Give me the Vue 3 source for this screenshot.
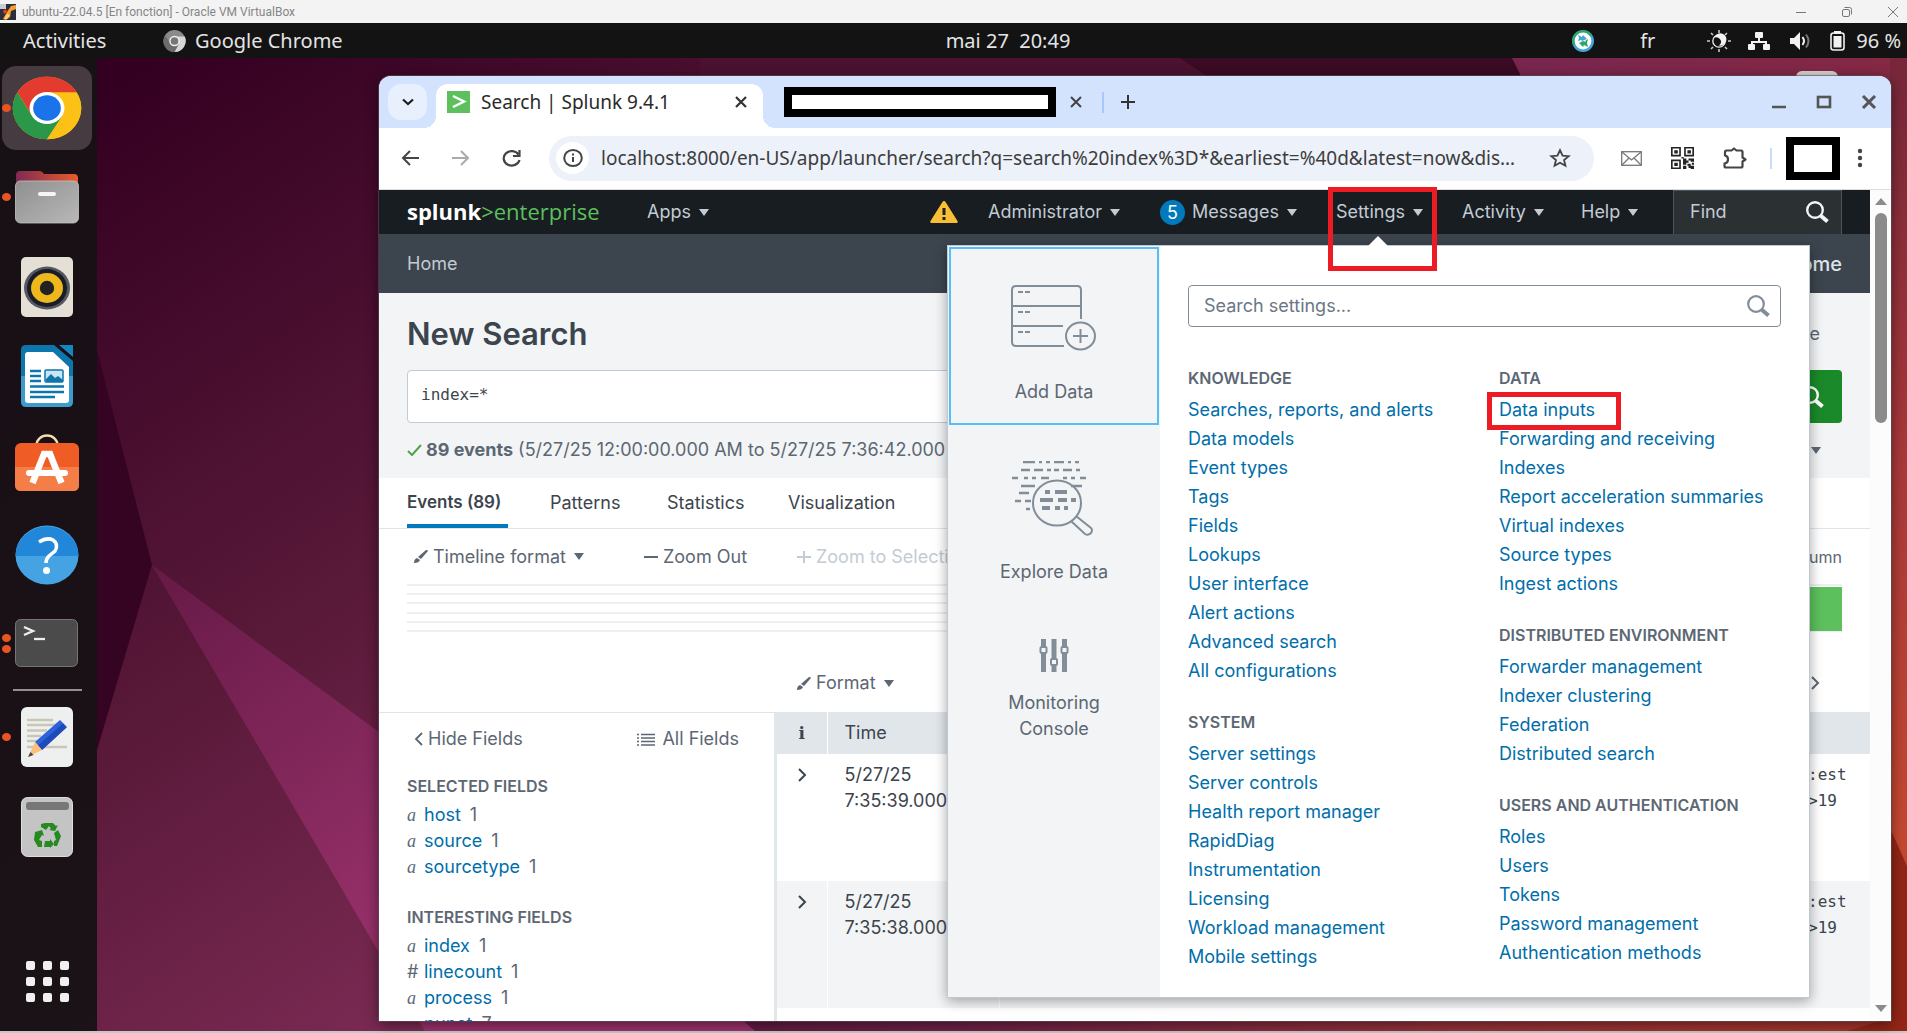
<script setup>
const dockApps = [
  { id: 'chrome', label: 'Google Chrome', dots: 1, active: true },
  { id: 'files', label: 'Files', dots: 1 },
  { id: 'music', label: 'Rhythmbox', dots: 0 },
  { id: 'writer', label: 'LibreOffice Writer', dots: 0 },
  { id: 'software', label: 'Ubuntu Software', dots: 0 },
  { id: 'help', label: 'Help', dots: 0 },
  { id: 'terminal', label: 'Terminal', dots: 2 },
]
const dockExtra = [
  { id: 'editor', label: 'Text Editor', dots: 1 },
  { id: 'trash', label: 'Trash', dots: 0 },
]
const knowledgeColumn = [
  {
    title: 'Knowledge',
    items: ['Searches, reports, and alerts', 'Data models', 'Event types', 'Tags', 'Fields', 'Lookups', 'User interface', 'Alert actions', 'Advanced search', 'All configurations'],
  },
  {
    title: 'System',
    items: ['Server settings', 'Server controls', 'Health report manager', 'RapidDiag', 'Instrumentation', 'Licensing', 'Workload management', 'Mobile settings'],
  },
]
const dataColumn = [
  {
    title: 'Data',
    items: ['Data inputs', 'Forwarding and receiving', 'Indexes', 'Report acceleration summaries', 'Virtual indexes', 'Source types', 'Ingest actions'],
  },
  {
    title: 'Distributed environment',
    items: ['Forwarder management', 'Indexer clustering', 'Federation', 'Distributed search'],
  },
  {
    title: 'Users and authentication',
    items: ['Roles', 'Users', 'Tokens', 'Password management', 'Authentication methods'],
  },
]
const settingsColumns = [knowledgeColumn, dataColumn]
const fieldGroups = [
  { title: 'Selected fields', fields: [['a', 'host', 1], ['a', 'source', 1], ['a', 'sourcetype', 1]] },
  { title: 'Interesting fields', fields: [['a', 'index', 1], ['#', 'linecount', 1], ['a', 'process', 1], ['a', 'punct', 7]] },
]
const events = [
  { date: '5/27/25', time: '7:35:39.000 PM', raw: [':est', '>19'] },
  { date: '5/27/25', time: '7:35:38.000 PM', raw: [':est', '>19'] },
]
</script>

<template>
  <div class="host">
    <header class="host-bar">
      <svg class="vb-icon" width="16" height="16" viewBox="0 0 16 16"><rect width="16" height="16" fill="#2b2f3c" /><path d="M0 0h6v5H0z" fill="#c9ccd3" /><path d="M7 8l4-6 5-1v4l-5 2-1 6-4 3-3-1z" fill="#f5a02c" /><path d="M4 15l3-5 3 1-3 4z" fill="#ffd27a" /><path d="M3 7l3-2 1 3-3 2z" fill="#e8431c" /></svg>
      <span class="host-title">ubuntu-22.04.5 [En fonction] - Oracle VM VirtualBox</span>
      <div class="host-controls">
        <button aria-label="Minimize"><svg width="12" height="12" viewBox="0 0 12 12"><path d="M1 6.500h10" stroke="#777" /></svg></button>
        <button aria-label="Restore"><svg width="12" height="12" viewBox="0 0 12 12" fill="none" stroke="#777"><rect x="1.500" y="3.500" width="7" height="7" rx="1.500" /><path d="M3.500 1.500h5a2 2 0 0 1 2 2v5" /></svg></button>
        <button aria-label="Close"><svg width="12" height="12" viewBox="0 0 12 12"><path d="M1 1l10 10M11 1L1 11" stroke="#777" /></svg></button>
      </div>
    </header>

    <div class="top-bar">
      <div class="top-left">
        <button class="top-btn activities">Activities</button>
        <button class="top-btn app-menu">
          <svg width="23" height="22" viewBox="0 0 24 24"><circle cx="12" cy="12" r="12" fill="#8a8a8a" /><path d="M12 7h11.200A12 12 0 0 1 12 24l5-9z" fill="#d5d5d5" /><path d="M1.500 6A12 12 0 0 0 12 24l4.500-9-8 .5z" fill="#6c6c6c" /><circle cx="12" cy="12" r="5.800" fill="#f2f2f2" /><circle cx="12" cy="12" r="4.200" fill="#777" /></svg>
          Google Chrome
        </button>
      </div>
      <button class="top-btn clock">mai 27&nbsp; 20:49</button>
      <div class="top-right">
        <svg class="tray-zap" width="24" height="24" viewBox="0 0 24 24"><circle cx="12" cy="12" r="11" fill="#43a5dc" /><path d="M1 12a11 11 0 0 1 20-6l-4 2-10 0-4 9a11 11 0 0 1-2-5z" fill="#2aa866" /><circle cx="12" cy="12" r="8.400" fill="#fff" /><path d="M7 6l4 2 1-2 4 4-5 2-1-1-3 1 1-3z" fill="#43a5dc" /><path d="M17 10l-3 2 1 1-3-1-4 2 4 4 1-2 4 2-1-4z" fill="#2aa866" /></svg>
        <span class="lang">fr</span>
        <svg class="tray-sun" width="24" height="22" viewBox="0 0 24 22"><circle cx="12" cy="11" r="6.200" fill="none" stroke="#f2f2f2" stroke-width="1.300" /><path d="M11 5.500a6 6 0 1 1 2 11q-2.500 0-4-2 5 0 5-4.500 0-3-3-4.500z" fill="#f2f2f2" transform="rotate(-40 12 11)" /><path d="M12 0v3M12 19v3M0 11h3M21 11h3M4 3l2 2M20 3l-2 2M4 19l2-2M20 19l-2-2" stroke="#c9c9c9" stroke-width="1.600" /></svg>
        <svg class="tray-net" width="22" height="18" viewBox="0 0 22 18" fill="#f2f2f2"><rect x="7" y="0" width="8" height="6" rx="1" /><rect x="0" y="12" width="7" height="6" rx="1" /><rect x="15" y="12" width="7" height="6" rx="1" /><path d="M10 5h2v4h7v4h-2v-2H5v2H3V9h7z" /></svg>
        <svg class="tray-vol" width="22" height="18" viewBox="0 0 22 18"><path d="M0 6h4l6-6v18l-6-6H0z" fill="#f2f2f2" /><path d="M12.500 5q3 4 0 8" fill="none" stroke="#f2f2f2" stroke-width="2" /><path d="M16 2.500q5 6.500 0 13" fill="none" stroke="#777" stroke-width="2" /></svg>
        <svg class="tray-bat" width="15" height="20" viewBox="0 0 15 20"><rect x="1" y="2" width="13" height="17" rx="2.500" fill="none" stroke="#f2f2f2" stroke-width="1.600" /><rect x="4" y="0" width="7" height="3" fill="#f2f2f2" /><rect x="3.500" y="5" width="8" height="11.500" fill="#f2f2f2" /></svg>
        <span>96 %</span>
      </div>
    </div>

    <div class="workspace">
      <svg class="wallpaper" viewBox="0 58 1907 973" preserveAspectRatio="none">
        <defs>
          <linearGradient id="wpBase" gradientUnits="userSpaceOnUse" x1="100" y1="100" x2="700" y2="1000"><stop offset="0" stop-color="#340021" /><stop offset=".5" stop-color="#591939" /><stop offset="1" stop-color="#87305c" /></linearGradient>
          <linearGradient id="wpBeam" gradientUnits="userSpaceOnUse" x1="150" y1="565" x2="420" y2="950"><stop offset="0" stop-color="#661a46" /><stop offset="1" stop-color="#9a326c" /></linearGradient>
          <linearGradient id="wpTop" x1="0" y1="0" x2="1" y2="0"><stop offset="0" stop-color="#78264f" /><stop offset="1" stop-color="#862944" /></linearGradient>
          <linearGradient id="wpRight" x1="0" y1="0" x2="0" y2="1"><stop offset="0" stop-color="#762739" /><stop offset=".4" stop-color="#a8383a" /><stop offset=".8" stop-color="#c54831" /><stop offset="1" stop-color="#c54831" /></linearGradient>
          <linearGradient id="wpBottom" x1="0" y1="0" x2="1" y2="0"><stop offset="0" stop-color="#611c42" /><stop offset=".2" stop-color="#6f2145" /><stop offset=".6" stop-color="#96333a" /><stop offset="1" stop-color="#a83629" /></linearGradient>
        </defs>
        <rect x="0" y="58" width="1907" height="973" fill="url(#wpBase)" />
        <path d="M97 350L152 565 97 750z" fill="#360423" />
        <path d="M152 565L770 1020 770 1031 425 1031z" fill="url(#wpBeam)" />
        <path d="M700 58h490l30 20H700z" fill="#4a122f" />
        <path d="M1180 58h340v20h-310z" fill="#3a0b23" />
        <path d="M1512 58h395v20h-385z" fill="url(#wpTop)" />
        <path d="M1890 58h17v973h-17z" fill="url(#wpRight)" />
        <path d="M740 1018h1167v13H755z" fill="url(#wpBottom)" />
        <path d="M1890 828l17 38v165h-60l43-13z" fill="#932617" />
      </svg>

      <nav class="dock" aria-label="Dock">
        <div class="dock-apps">
          <button v-for="app in dockApps" :key="app.id" class="dock-item" :class="{ active: app.active }" :aria-label="app.label">
            <span class="run-dots"><i v-for="n in app.dots" :key="n"></i></span>
            <svg v-if="app.id === 'chrome'" width="70" height="64" viewBox="0 0 48 48" preserveAspectRatio="none"><circle cx="24" cy="24" r="23.500" fill="#fbc116" /><path d="M3.600 12.300A23.500 23.500 0 0 1 44.400 12.300H24L14 30z" fill="#e33b2e" /><path d="M3.600 12.300A23.500 23.500 0 0 0 24 47.500L34.500 30 24 24 13.500 29.500z" fill="#2a9848" /><path d="M24 12.300h20.400A23.500 23.500 0 0 1 24 47.500L34.500 30z" fill="#fbc116" /><circle cx="24" cy="24" r="12" fill="#fff" /><circle cx="24" cy="24" r="9.500" fill="#1a73e8" /></svg>
            <svg v-else-if="app.id === 'files'" width="64" height="54" viewBox="0 0 64 54"><defs><linearGradient id="fBack" x1="0" y1="0" x2="1" y2="0"><stop offset="0" stop-color="#7e2a53" /><stop offset="1" stop-color="#e95c2a" /></linearGradient><linearGradient id="fFront" x1="0" y1="0" x2="1" y2="1"><stop offset="0" stop-color="#8f8f8f" /><stop offset="1" stop-color="#b8b8b8" /></linearGradient></defs><path d="M1 20V5q0-4 4-4h20q2 0 4 3h30q4 0 4 4v12z" fill="url(#fBack)" /><rect x=".5" y="11" width="63" height="42" rx="5" fill="url(#fFront)" stroke="#c4c4c4" stroke-width=".8" /><rect x="23" y="22" width="18" height="4" rx="2" fill="#f5f5f5" /></svg>
            <svg v-else-if="app.id === 'music'" width="52" height="60" viewBox="0 0 52 60"><rect width="52" height="60" rx="5" fill="#e4e0d6" /><ellipse cx="26" cy="31" rx="23" ry="21.500" fill="#55585e" /><ellipse cx="26" cy="31" rx="20" ry="19" fill="#1b1c2a" /><ellipse cx="26" cy="31" rx="16" ry="15" fill="#ecb81c" /><circle cx="26" cy="31" r="7.200" fill="#222" /></svg>
            <svg v-else-if="app.id === 'writer'" width="52" height="62" viewBox="0 0 52 62"><defs><linearGradient id="wr" x1="0" y1="0" x2="0" y2="1"><stop offset=".5" stop-color="#0d76ad" /><stop offset=".5" stop-color="#3d9ccb" /></linearGradient></defs><path d="M5 0h28l19 16v41q0 5-5 5H5q-5 0-5-5V5q0-5 5-5z" fill="url(#wr)" /><path d="M38 0h14v12z" fill="#1587bf" /><path d="M7 7h25l16 15v33q0 3-3 3H7q-3 0-3-3V10q0-3 3-3z" fill="#fff" /><path d="M9 26h11M9 31h11M9 36h11M9 41.500h34M9 47h34M9 52h25" stroke="#0d76ad" stroke-width="2.400" /><rect x="24" y="25" width="18" height="12" rx="1" fill="#cce4f4" stroke="#0d76ad" stroke-width="1.500" /><path d="M25 37v-3l5-5 4 4 3-2 5 4v2z" fill="#0d76ad" /></svg>
            <svg v-else-if="app.id === 'software'" width="64" height="62" viewBox="0 0 64 62"><path d="M21.500 13v-2a10 9 0 0 1 21 0v2" fill="none" stroke="#f3dcb0" stroke-width="2.500" /><rect y="9" width="64" height="48" rx="6" fill="#f05c25" /><path d="M0 33h64v18q0 6-6 6H6q-6 0-6-6z" fill="#f47d48" /><path d="M17.500 49l11.500-29h6l11.500 29" fill="none" stroke="#fff" stroke-width="6.500" /><rect x="11" y="36" width="42" height="6" rx="3" fill="#fff" /></svg>
            <svg v-else-if="app.id === 'help'" width="64" height="60" viewBox="0 0 64 60"><ellipse cx="32" cy="30" rx="31.500" ry="29.500" fill="#45a2e3" /><path d="M.5 31a31.500 29.500 0 0 1 63 0z" fill="#2287d9" /><path d="M24 17q8-5 14-2 6 4 2 11l-6 5q-3 3-3 7" fill="none" stroke="#fff" stroke-width="3.500" /><circle cx="31.500" cy="45.500" r="3.500" fill="#fff" /></svg>
            <svg v-else width="64" height="50" viewBox="0 0 64 50"><rect x=".5" y=".5" width="62" height="47" rx="5" fill="#4b4b4b" stroke="#757575" /><path d="M9 8l9 4-9 4" fill="none" stroke="#eee" stroke-width="2.300" /><path d="M19 20h11" stroke="#eee" stroke-width="2.300" /></svg>
          </button>
        </div>
        <hr class="dock-sep" />
        <div class="dock-extra">
          <button v-for="app in dockExtra" :key="app.id" class="dock-item" :aria-label="app.label">
            <span class="run-dots"><i v-for="n in app.dots" :key="n"></i></span>
            <svg v-if="app.id === 'editor'" width="52" height="60" viewBox="0 0 52 60"><rect width="52" height="60" rx="6" fill="#eef0f0" /><path d="M6 13h26M6 18h34M6 23.500h20M6 29h14M6 34h10M6 40h40" stroke="#c9c6b6" stroke-width="2.600" /><path d="M14 35l25-22 7 7-25 23z" fill="#2c63dc" /><path d="M17 38.500l25-22 3.500 4L21 43z" fill="#1d4bb8" /><path d="M14 35l7 8-14 7z" fill="#fcc07c" /><path d="M9.500 45l3 3L7 50z" fill="#444" /></svg>
            <svg v-else width="52" height="60" viewBox="0 0 52 60"><rect x=".5" y=".5" width="51" height="59" rx="6" fill="#c4c4c4" stroke="#dedede" /><rect x="5" y="5" width="43" height="8" rx="3" fill="#777" /><g fill="#258a1f"><path d="M20 27l4-1h8l3 3 2-1-3 6-6-1 2-1-2-3-3 4-5-3z" /><path d="M14 35l7-2 2 6-2-1-3 5 3 1v6h-4l-4-7z" /><path d="M24 44h5v-2l4 5-4 4v-1h-6zM33 36l4-3 3 6-4 10h-3v-5l2-1z" /></g></svg>
          </button>
        </div>
        <button class="show-apps" aria-label="Show applications"><i v-for="n in 9" :key="n"></i></button>
      </nav>

      <span class="desktop-folder"></span>

      <main class="browser">
        <div class="tab-strip">
          <button class="tab-search" aria-label="Search tabs"><svg width="14" height="10" viewBox="0 0 14 10"><path d="M2 2.500l5 4.500 5-4.500" fill="none" stroke="#1f1f1f" stroke-width="2.200" /></svg></button>
          <div class="tab">
            <svg width="23" height="22" viewBox="0 0 23 22"><rect width="23" height="22" fill="#5cc05c" /><path d="M6 5l11 5.500L6 16" fill="none" stroke="#fff" stroke-width="2.500" /></svg>
            <span class="tab-title">Search | Splunk 9.4.1</span>
            <button class="tab-close" aria-label="Close tab"><svg width="12" height="12" viewBox="0 0 12 12"><path d="M1 1l10 10M11 1L1 11" stroke="#333" stroke-width="2.200" /></svg></button>
          </div>
          <div class="tab-other">
            <span class="redacted"></span>
            <button class="tab-close" aria-label="Close tab"><svg width="12" height="12" viewBox="0 0 12 12"><path d="M1 1l10 10M11 1L1 11" stroke="#444" stroke-width="2" /></svg></button>
          </div>
          <span class="tab-divider"></span>
          <button class="new-tab" aria-label="New tab"><svg width="16" height="14" viewBox="0 0 16 14"><path d="M8 0v14M1 7h14" stroke="#333" stroke-width="2" /></svg></button>
          <div class="win-controls">
            <button aria-label="Minimize"><svg width="16" height="14" viewBox="0 0 16 14"><path d="M1 12h14" stroke="#555" stroke-width="2.500" /></svg></button>
            <button aria-label="Maximize"><svg width="16" height="14" viewBox="0 0 16 14"><rect x="2" y="2" width="12" height="10" fill="none" stroke="#555" stroke-width="2.600" /></svg></button>
            <button aria-label="Close"><svg width="16" height="14" viewBox="0 0 16 14"><path d="M2 1l12 12M14 1L2 13" stroke="#555" stroke-width="3" /></svg></button>
          </div>
        </div>

        <div class="toolbar">
          <button class="nav-btn" aria-label="Back"><svg width="18" height="16" viewBox="0 0 18 16" fill="none" stroke="#444" stroke-width="2"><path d="M18 8H2M9 1L2 8l7 7" /></svg></button>
          <button class="nav-btn" aria-label="Forward"><svg width="18" height="16" viewBox="0 0 18 16" fill="none" stroke="#aaa" stroke-width="2"><path d="M0 8h16M9 1l7 7-7 7" /></svg></button>
          <button class="nav-btn" aria-label="Reload"><svg width="20" height="18" viewBox="0 0 20 18" fill="none" stroke="#444" stroke-width="2.200"><path d="M16.500 5.500A8 7.200 0 1 0 17.500 11" /><path d="M17.500 1v6h-6.500" /></svg></button>
          <div class="omnibox">
            <span class="site-info"><svg width="20" height="18" viewBox="0 0 20 18"><ellipse cx="10" cy="9" rx="8.800" ry="8" fill="none" stroke="#444" stroke-width="2" /><path d="M10 8v5M10 4.500v2" stroke="#444" stroke-width="2" /></svg></span>
            <input class="url" aria-label="Address" value="localhost:8000/en-US/app/launcher/search?q=search%20index%3D*&amp;earliest=%40d&amp;latest=now&amp;dis…" />
            <button aria-label="Bookmark"><svg width="22" height="20" viewBox="0 0 24 23" preserveAspectRatio="none"><path d="M12 2.500l2.800 6.200 6.700.6-5.100 4.500 1.500 6.600L12 17l-5.900 3.400 1.500-6.600-5.100-4.500 6.700-.6z" fill="none" stroke="#444" stroke-width="2" /></svg></button>
          </div>
          <svg class="ext-mail" width="21" height="15" viewBox="0 0 21 15" fill="none" stroke="#777" stroke-width="1.300"><rect x=".7" y=".7" width="19.600" height="13.600" /><path d="M1 1l9.500 8L20 1M1 14l7-7M20 14l-7-7" /></svg>
          <svg class="ext-qr" width="23" height="22" viewBox="0 0 21 21" preserveAspectRatio="none"><path d="M0 0h9v9H0zM12 0h9v9h-9zM0 12h9v9H0z" fill="#222" /><path d="M1.500 1.500h6v6h-6zM13.500 1.500h6v6h-6zM1.500 13.500h6v6h-6z" fill="#fff" /><path d="M3 3h3.200v3.200H3zM15 3h3.200v3.200H15zM3 15h3.200v3.200H3zM11 11h3v2h2v2h-2v2h-3zM16 11h5v3h-3v-1h-2zM15 16h3v2h3v3h-3v-1h-2v-2h-1zM11 18h3v3h-3zM19 15h2v2h-2zM9.500 9.500h2v1.500h-2z" fill="#222" /></svg>
          <svg class="ext-puzzle" width="24" height="22" viewBox="0 0 24 22"><path d="M3.500 3.500H8.500L11 1.500l2.500 2H18q1.500 0 1.500 1.500V10.500L22.500 12.500l-3 2V19q0 1.500-1.500 1.500H3q-1.500 0-1.500-1.500v-2.500q3.500-.5 3.500-4T2 8.500V5q0-1.500 1.500-1.500z" fill="none" stroke="#444" stroke-width="2.200" stroke-linejoin="round" /></svg>
          <span class="bar-divider"></span>
          <span class="redacted profile"></span>
          <button class="menu-btn" aria-label="Menu"><svg width="6" height="20" viewBox="0 0 6 20" fill="#444"><circle cx="3" cy="3" r="2.200" /><circle cx="3" cy="10" r="2.200" /><circle cx="3" cy="17" r="2.200" /></svg></button>
        </div>

        <div class="viewport">
          <div class="page">
            <header class="splunk-bar">
              <a class="brand" href="#"><b>splunk</b><span>&gt;enterprise</span></a>
              <button class="menu apps">Apps<i class="caret"></i></button>
              <div class="splunk-right">
                <svg class="warn" width="28" height="22" viewBox="0 0 28 22"><path d="M14 0q1 0 1.700 1.200L27.500 20q.8 2-1 2H1.500q-1.800 0-1-2L12.300 1.200Q13 0 14 0z" fill="#f8be34" /><path d="M14 7v7M14 16v3" stroke="#222" stroke-width="3" /></svg>
                <button class="menu m-admin">Administrator<i class="caret"></i></button>
                <button class="menu m-msg"><span class="badge">5</span>Messages<i class="caret"></i></button>
                <button class="menu m-set">Settings<i class="caret"></i><span class="mark mark-settings"></span></button>
                <button class="menu m-act">Activity<i class="caret"></i></button>
                <button class="menu m-help">Help<i class="caret"></i></button>
                <div class="find">
                  <input aria-label="Find" placeholder="Find" />
                  <svg width="24" height="22" viewBox="0 0 24 22" fill="none" stroke="#f2f4f5"><circle cx="10" cy="9" r="7.800" stroke-width="2.400" /><path d="M15.500 14.500l7 6" stroke-width="4" /></svg>
                </div>
              </div>
            </header>
            <div class="app-bar"><a href="#">Home</a><strong>Home</strong></div>

            <section class="search-head">
              <div class="title-row"><h1>New Search</h1><a href="#">Close</a></div>
              <div class="query">
                <input aria-label="Search query" value="index=*" />
                <button aria-label="Run search"><svg width="24" height="22" viewBox="0 0 24 22" fill="none" stroke="#fff"><circle cx="10" cy="9" r="7.800" stroke-width="2.400" /><path d="M15.500 14.500l7 6" stroke-width="4" /></svg></button>
              </div>
              <div class="status">
                <svg width="15" height="12" viewBox="0 0 15 12"><path d="M1 7l4 4 9-10" fill="none" stroke="#53a051" stroke-width="2" /></svg>
                <span><b>89 events</b> (5/27/25 12:00:00.000 AM to 5/27/25 7:36:42.000 PM)</span>
                <i class="caret"></i>
              </div>
            </section>

            <nav class="tabs" aria-label="Results">
              <a class="current" href="#">Events (89)</a>
              <a class="t-pat" href="#">Patterns</a>
              <a class="t-stat" href="#">Statistics</a>
              <a href="#">Visualization</a>
            </nav>

            <div class="timeline-bar">
              <button class="tl-format"><svg class="brush" width="14" height="13" viewBox="0 0 14 13"><path d="M0 13q0-4 3-5l3 2q-1 3-6 3zM4 7l8-7q2 0 2 1L7 9z" /></svg>Timeline format<i class="caret"></i></button>
              <button class="tl-out"><svg width="14" height="12" viewBox="0 0 14 12"><path d="M0 6h14" stroke="#5c6773" stroke-width="2" /></svg>Zoom Out</button>
              <button class="tl-sel" disabled><svg width="14" height="12" viewBox="0 0 14 12"><path d="M0 6h14M7 0v12" stroke="#c3cbd4" stroke-width="2" /></svg>Zoom to Selection</button>
              <span class="per-col">1 hour per column</span>
            </div>
            <div class="chart"><i v-for="n in 6" :key="n"></i><span class="bar"></span></div>

            <div class="format-bar">
              <button><svg class="brush" width="14" height="13" viewBox="0 0 14 13"><path d="M0 13q0-4 3-5l3 2q-1 3-6 3zM4 7l8-7q2 0 2 1L7 9z" /></svg>Format<i class="caret"></i></button>
              <svg width="10" height="14" viewBox="0 0 10 14"><path d="M2 1l6 6-6 6" fill="none" stroke="#5c6773" stroke-width="2" /></svg>
            </div>

            <div class="results">
              <aside class="fields">
                <div class="fields-top">
                  <button><svg width="9" height="14" viewBox="0 0 9 14"><path d="M8 1L2 7l6 6" fill="none" stroke="#5c6773" stroke-width="1.800" /></svg>Hide Fields</button>
                  <button class="all"><svg width="18" height="13" viewBox="0 0 18 13"><path d="M0 1.500h2M4 1.500h14M0 5h2M4 5h14M0 8.500h2M4 8.500h14M0 12h2M4 12h14" stroke="#5c6773" stroke-width="1.700" /></svg>All Fields</button>
                </div>
                <section v-for="group in fieldGroups" :key="group.title">
                  <h2>{{ group.title }}</h2>
                  <ul>
                    <li v-for="[kind, name, count] in group.fields" :key="name">
                      <span :class="kind === 'a' ? 'alpha' : 'num'">{{ kind }}</span><a href="#">{{ name }}</a><span>{{ count }}</span>
                    </li>
                  </ul>
                </section>
              </aside>
              <table class="events">
                <colgroup><col class="c-info" /><col class="c-time" /><col /></colgroup>
                <thead><tr><th class="info">i</th><th>Time</th><th></th></tr></thead>
                <tbody>
                  <tr v-for="row in events" :key="row.time">
                    <td class="expand"><button aria-label="Expand event"><svg width="9" height="14" viewBox="0 0 9 14"><path d="M1 1l6 6-6 6" fill="none" stroke="#3c444d" stroke-width="2" /></svg></button></td>
                    <td>{{ row.date }}<br />{{ row.time }}</td>
                    <td class="raw"><div>{{ row.raw[0] }}<br />{{ row.raw[1] }}</div></td>
                  </tr>
                </tbody>
              </table>
            </div>

            <div class="settings-panel">
              <div class="shortcuts">
                <a class="tile focused" href="#">
                  <span class="tile-icon"><svg width="86" height="68" viewBox="0 0 86 68" fill="none" stroke="#818d99" stroke-width="2"><path d="M70 34V5q0-4-4-4H5Q1 1 1 5v52q0 4 4 4h48M1 21h69M1 41h51" /><path d="M7 7h5M14 7h5M7 27h5M14 27h5M7 47h5M14 47h5" /><ellipse cx="69.500" cy="51" rx="14.500" ry="13.500" /><path d="M69.500 44v14M62 51h15" /></svg></span>
                  <span>Add Data</span>
                </a>
                <a class="tile explore" href="#">
                  <span class="tile-icon"><svg width="86" height="76" viewBox="0 0 86 76" fill="none" stroke="#818d99" stroke-width="2.600"><path d="M12 1h12M28 1h3M35 1h4M43 1h10M57 1h3M64 1h4M10 9h9M23 9h9M36 9h4M43 9h5M52 9h9M65 9h4M1 17h6M13 17h4M21 17h4M30 17h8M52 17h4M60 17h4M69 17h6M10 25h14M60 25h11M8 32h10M4 40h6M14 40h6M15 48h4" /><path d="M34 31h5M44 31h12M29 39h13M47 39h9M60 39h5M31 47h8M44 47h5M53 47h4" stroke-width="4" /><ellipse cx="46" cy="42" rx="24" ry="22.500" stroke-width="2" /><path d="M60 60l14 13q3 2 6-1 2-3 0-5L65 55" stroke-width="2" /></svg></span>
                  <span>Explore Data</span>
                </a>
                <a class="tile small" href="#">
                  <span class="tile-icon"><svg width="30" height="33" viewBox="0 0 30 33"><path d="M4.500 0v33M15 0v33M25.500 0v33" stroke="#818d99" stroke-width="5" /><g fill="#f2f4f5" stroke="#818d99" stroke-width="2"><rect x="1.500" y="8" width="6" height="6" rx="1" /><rect x="12" y="20" width="6" height="6" rx="1" /><rect x="22.500" y="8" width="6" height="6" rx="1" /></g></svg></span>
                  <span>Monitoring<br />Console</span>
                </a>
              </div>
              <div class="settings-body">
                <div class="settings-search">
                  <input aria-label="Search settings" placeholder="Search settings..." />
                  <svg width="24" height="22" viewBox="0 0 24 22" fill="none" stroke="#818d99"><circle cx="10" cy="9" r="7.800" stroke-width="2.200" /><path d="M15.500 14.500l7 6" stroke-width="4" /></svg>
                </div>
                <div class="settings-cols">
                  <div v-for="(column, c) in settingsColumns" :key="c" class="settings-col">
                    <section v-for="group in column" :key="group.title">
                      <h2>{{ group.title }}</h2>
                      <ul>
                        <li v-for="item in group.items" :key="item"><a href="#">{{ item }}<span v-if="item === 'Data inputs'" class="mark mark-inputs"></span></a></li>
                      </ul>
                    </section>
                  </div>
                </div>
              </div>
            </div>
          </div>
          <div class="scrollbar"><span class="up"></span><span class="thumb"></span><span class="down"></span></div>
        </div>
      </main>
    </div>
  </div>
</template>

<style>
body { background: #c8c8c8; }
</style>

<style scoped>
.host { --ui: "Inter", "Liberation Sans", sans-serif; --gnome: "Noto Sans", "Open Sans", sans-serif; display: flex; flex-direction: column; height: 100vh; box-sizing: border-box; padding-bottom: 2px; overflow: hidden; font-family: var(--ui); }
.host * { box-sizing: border-box; }
button { border: 0; background: none; padding: 0; font: inherit; color: inherit; display: inline-flex; align-items: center; justify-content: center; white-space: nowrap; }
a { text-decoration: none; color: inherit; }
input { border: 0; background: none; outline: 0; font: inherit; padding: 0; min-width: 0; }
ul { list-style: none; margin: 0; padding: 0; }
svg { flex: none; display: block; }
h1, h2 { margin: 0; }

.host-bar { display: flex; align-items: center; height: 23px; flex: none; background: #f3f3f3; color: #858585; font: 12px/16px Roboto, "Noto Sans", sans-serif; padding-right: 8px; }
.host-title { margin-left: 6px; flex: 1; }
.host-controls { display: flex; gap: 34px; }

.top-bar { display: flex; align-items: center; height: 35px; flex: none; background: #131313; color: #e4e4e4; font: 20px/24px var(--gnome); padding: 0 6px 0 23px; white-space: nowrap; }
.top-left, .top-right { flex: 1; display: flex; align-items: center; }
.top-right { justify-content: flex-end; }
.activities { width: 140px; justify-content: flex-start; }
.app-menu { gap: 9px; }
.clock { margin: 0 -8px 0 84px; }
.tray-zap { margin-right: 45px; }
.lang { margin-right: 52px; }
.tray-sun { margin-right: 17px; }
.tray-net { margin-right: 20px; }
.tray-vol { margin-right: 18px; }
.tray-bat { margin-right: 11px; }

.workspace { position: relative; flex: 1; min-height: 0; display: flex; }
.wallpaper { position: absolute; inset: 0; width: 100%; height: 100%; }
.dock { position: relative; width: 97px; background: rgba(22, 17, 20, .93); display: flex; flex-direction: column; padding: 8px 0 29px; }
.dock-apps { display: flex; flex-direction: column; justify-content: space-between; height: 620px; }
.dock-extra { display: flex; flex-direction: column; gap: 6px; margin-top: 4px; }
.dock-item { position: relative; width: 90px; height: 84px; margin-left: 2px; border-radius: 14px; flex: none; }
.dock-item.active { background: #453b41; }
.run-dots { position: absolute; left: 0; top: 0; bottom: 0; display: flex; flex-direction: column; justify-content: center; gap: 3px; }
.run-dots i { width: 9px; height: 8px; border-radius: 50%; background: #e95420; }
.dock-sep { width: 69px; height: 2px; border: 0; background: #958f93; margin: 3px 0 0 13px; flex: none; }
.show-apps { margin: auto 0 0 26px; display: grid; grid-template-columns: repeat(3, 9px); gap: 7px 8px; width: 43px; }
.show-apps i { height: 9px; border-radius: 2px; background: #f2f0ef; }
.desktop-folder { position: absolute; right: 69px; top: 13px; width: 42px; height: 20px; border-radius: 6px; background: #d8d4d2; }

.browser { position: absolute; left: 379px; right: 16px; top: 18px; bottom: 10px; display: flex; flex-direction: column; background: #fff; border-radius: 12px 12px 0 0; overflow: hidden; box-shadow: 0 0 0 1px rgba(90, 80, 90, .6), 0 3px 14px rgba(0, 0, 0, .5); }
.tab-strip { display: flex; align-items: flex-start; height: 52px; flex: none; background: #d3e3fd; padding: 8px 14px 0 9px; font: 19px/24px var(--gnome); color: #2a2a2a; }
.tab-search { width: 39px; height: 36px; border-radius: 13px; background: #e9f0fd; margin-right: 9px; }
.tab { position: relative; width: 327px; height: 44px; border-radius: 12px 12px 0 0; background: #fff; display: flex; align-items: center; padding: 0 16px 8px 11px; }
.tab::before, .tab::after { content: ""; position: absolute; bottom: 0; width: 12px; height: 12px; }
.tab::before { left: -12px; background: radial-gradient(circle at 0 0, transparent 12px, #fff 12px); }
.tab::after { right: -12px; background: radial-gradient(circle at 100% 0, transparent 12px, #fff 12px); }
.tab-title { flex: 1; margin-left: 11px; white-space: nowrap; }
.tab-other { display: flex; align-items: center; margin: 3px 0 0 21px; gap: 14px; }
.tab-other .tab-close { margin-top: -1px; }
.redacted { border: 8px solid #000; background: #fff; width: 272px; height: 30px; }
.tab-divider { width: 2px; height: 21px; margin: 8px 16px 0 20px; background: #a8c7fa; }
.new-tab { margin-top: 11px; }
.win-controls { margin: 11px 0 0 auto; display: flex; gap: 29px; }

.toolbar { display: flex; align-items: center; height: 62px; flex: none; border-bottom: 1px solid #ddd; background: #fff; padding: 0 11px 1px 5px; }
.nav-btn { width: 51px; height: 40px; }
.omnibox { display: flex; align-items: center; flex: 1; height: 45px; margin-left: 12px; border-radius: 23px; background: #ecf1fa; padding: 0 23px 0 7px; }
.site-info { width: 33px; height: 32px; border-radius: 50%; background: #fff; display: flex; align-items: center; justify-content: center; margin-right: 12px; }
.url { flex: 1; font: 19px/28px var(--gnome); color: #3d3d3d; }
.ext-mail { margin-left: 27px; }
.ext-qr { margin-left: 29px; }
.ext-puzzle { margin-left: 29px; }
.bar-divider { width: 2px; height: 21px; margin: 0 14px 0 23px; background: #c9dcfb; }
.redacted.profile { width: 54px; height: 43px; flex: none; }
.menu-btn { width: 40px; height: 32px; }

.viewport { display: flex; flex: 1; min-height: 0; }
.page { position: relative; flex: 1; min-width: 0; display: flex; flex-direction: column; font-size: 18px; line-height: 26px; color: #3c444d; }
.caret { display: inline-block; border: 5px solid transparent; border-top: 7px solid currentColor; border-bottom: 0; margin-left: 8px; }
.splunk-bar { display: flex; align-items: center; height: 44px; flex: none; background: #171d21; color: #c3cbd4; padding: 0 28px; }
.brand { width: 240px; padding-bottom: 2px; font: 22px/26px "Open Sans", sans-serif; color: #5cc05c; }
.brand b { color: #fff; font-weight: 700; }
.splunk-right { margin-left: auto; display: flex; align-items: center; height: 44px; }
.warn { margin-right: 30px; }
.menu { justify-content: flex-start; position: relative; height: 44px; }
.m-admin { width: 172px; }
.m-msg { width: 176px; }
.m-set { width: 126px; }
.m-act { width: 119px; }
.m-help { width: 92px; }
.badge { width: 25px; height: 25px; border-radius: 50%; background: #007abd; color: #fff; text-align: center; margin-right: 7px; }
.find { width: 169px; height: 45px; display: flex; align-items: center; border: 1px solid #4a5561; background: #2b3033; padding: 0 12px 0 16px; }
.find input { flex: 1; color: #c3cbd4; }
.find input::placeholder { color: #c3cbd4; opacity: 1; }
.app-bar { display: flex; justify-content: space-between; align-items: center; height: 59px; flex: none; background: #3c444d; color: #c3cbd4; padding: 0 28px; }
.app-bar strong { font-weight: 500; font-size: 20px; color: #dfe4e9; }

.search-head { flex: none; background: #f2f4f5; padding: 25px 28px 15px; }
.title-row { display: flex; justify-content: space-between; align-items: center; padding-right: 22px; color: #5c6773; }
h1 { font-size: 31px; line-height: 32px; font-weight: 600; color: #3c444d; }
.query { display: flex; height: 53px; margin-top: 20px; border: 1px solid #c3cbd4; border-radius: 4px; background: #fff; }
.query input { flex: 1; align-self: center; margin: 0 13px; padding-bottom: 4px; font: 16px/20px "DejaVu Sans Mono", monospace; color: #3c444d; }
.query button { width: 60px; margin: -1px; background: #1a8929; border-radius: 0 4px 4px 0; }
.status { display: flex; align-items: center; gap: 4px; margin-top: 14px; color: #5c6773; padding-right: 21px; white-space: nowrap; }
.status .caret { margin-left: auto; }
.tabs { display: flex; align-items: stretch; height: 51px; flex: none; border-bottom: 1px solid #dde4ea; padding: 0 28px; line-height: 49px; }
.tabs .current { font-weight: 600; width: 101px; margin-right: 42px; border-bottom: 4px solid #007abd; white-space: nowrap; font-size: 17px; }
.t-pat { width: 117px; }
.t-stat { width: 121px; }
.timeline-bar { display: flex; align-items: center; height: 55px; flex: none; padding: 0 28px 0 35px; color: #5c6773; }
.timeline-bar button svg, .format-bar button svg, .fields-top svg { margin-right: 5px; }
.brush { fill: #5c6773; }
.timeline-bar button, .format-bar button { justify-content: flex-start; }
.tl-format { width: 230px; }
.tl-out { width: 153px; }
.tl-sel { color: #c3cbd4; }
.per-col { margin-left: auto; font-size: 16px; }
.chart { position: relative; display: flex; flex-direction: column; justify-content: space-between; height: 48px; flex: none; margin: 0 28px; }
.chart i { height: 2px; background: #eeeff0; }
.bar { position: absolute; right: 0; bottom: 1px; width: 60px; height: 44px; background: #5cc05c; }
.format-bar { display: flex; align-items: center; justify-content: space-between; height: 58px; flex: none; margin-top: 22px; padding: 0 50px 0 418px; color: #5c6773; }

.results { display: flex; align-items: flex-start; }
.fields { width: 398px; flex: none; min-height: 320px; border-top: 1px solid #dde4ea; border-right: 3px solid #e1e6eb; padding: 13px 35px 0 28px; color: #5c6773; }
.fields-top { display: flex; justify-content: space-between; padding-left: 7px; margin-bottom: 21px; }
.fields-top .all svg { margin-right: 7px; }
.fields section { margin-bottom: 24px; }
h2 { font-size: 16px; line-height: 26px; margin-bottom: 3px; font-weight: 600; text-transform: uppercase; color: #5c6773; white-space: nowrap; }
.fields li { display: flex; }
.fields li a { color: #006eaa; margin-right: 9px; }
.alpha, .num { width: 17px; }
.alpha { font: italic 18px/26px "Liberation Serif", serif; }
.events { flex: 1; border-collapse: collapse; table-layout: fixed; width: 100%; }
.c-info { width: 50px; }
.c-time { width: 172px; }
th { height: 42px; background: #e1e6eb; font-weight: 400; text-align: left; padding: 0 0 0 17px; border-left: 1px solid #fff; }
th:first-child, td:first-child { border-left: 0; }
th.info { text-align: center; padding: 0; font: bold 17px/26px "DejaVu Serif", serif; }
td { height: 127px; vertical-align: top; padding: 8px 0 0 17px; border-left: 1px solid #fff; white-space: nowrap; }
td.expand { padding: 8px 0 0 21px; }
.expand button { height: 26px; }
tbody tr:nth-child(even) { background: #f2f4f5; }
.raw div { width: 38px; margin: 0 24px 0 auto; font: 16px/26px "DejaVu Sans Mono", monospace; }

.settings-panel { position: absolute; z-index: 2; top: 55px; right: 60px; width: 863px; display: flex; background: #fff; border: 1px solid #c0c8d2; box-shadow: 0 3px 12px rgba(0, 0, 0, .35); }
.settings-panel::before { content: ""; position: absolute; left: 420px; top: -10px; border: 10px solid transparent; border-top: 0; border-bottom-color: #fff; }
.shortcuts { width: 212px; flex: none; background: #f2f4f5; padding: 1px; }
.tile { display: flex; flex-direction: column; align-items: center; gap: 18px; height: 178px; padding-top: 36px; border: 2px solid transparent; text-align: center; color: #5c6773; }
.tile.focused { border-color: #56bdf5; }
.tile.explore { height: 176px; padding-top: 34px; gap: 22px; }
.tile-icon { height: 76px; }
.small .tile-icon { height: 33px; }
.settings-body { flex: 1; padding: 39px 28px 3px; }
.settings-search { display: flex; align-items: center; height: 42px; border: 1px solid #818d99; border-radius: 4px; padding: 0 10px 0 15px; }
.settings-search input { flex: 1; color: #5c6773; }
.settings-search input::placeholder { color: #6b7785; opacity: 1; }
.settings-cols { display: flex; margin-top: 37px; }
.settings-col { width: 311px; flex: none; }
.settings-col:last-child { width: auto; }
.settings-col section { margin-bottom: 23px; }
.settings-col h2 { line-height: 29px; margin-bottom: 2px; }
.settings-col li { line-height: 29px; color: #006eaa; white-space: nowrap; }
.settings-col li a { position: relative; }
.mark { position: absolute; z-index: 5; border: 5px solid #ed1c24; pointer-events: none; }
.mark-settings { left: -8px; top: -3px; width: 109px; height: 84px; }
.mark-inputs { left: -12px; top: -7px; width: 134px; height: 38px; }

.scrollbar { width: 21px; flex: none; background: #fcfcfc; display: flex; flex-direction: column; align-items: center; padding: 8px 0 9px; }
.scrollbar .up { border: 6px solid transparent; border-top: 0; border-bottom: 7px solid #8b8b8b; }
.scrollbar .thumb { width: 12px; height: 210px; margin-top: 8px; border-radius: 6px; background: #8b8b8b; }
.scrollbar .down { margin-top: auto; border: 6px solid transparent; border-bottom: 0; border-top: 7px solid #8b8b8b; }
</style>
